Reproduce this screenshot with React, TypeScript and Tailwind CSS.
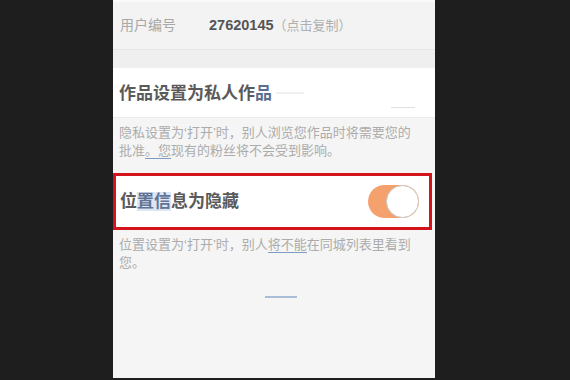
export default function App() {
  return (
    <div
      className="flex h-[380px] w-[570px] overflow-hidden bg-[#1e1e1e]"
      style={{ fontFamily: '"Liberation Sans", "Noto Sans CJK SC", sans-serif' }}
    >
      {/* phone screen */}
      <div className="ml-[113px] flex h-[378px] w-[322px] flex-col bg-[#f5f5f5]">
        {/* user id row */}
        <div className="flex h-[50px] items-center border-t-2 border-b border-t-[#fafafa] border-b-[#e6e6e6] bg-[#f3f3f3] pl-[7px]">
          <span className="w-[89px] text-[14px] text-[#a8a8a8]">用户编号</span>
          <span className="text-[14.5px] font-bold text-[#555]">27620145</span>
          <span className="text-[13px] text-[#b0b0b0]">（点击复制）</span>
        </div>

        <div className="h-[18px] bg-[#efefef]" />

        {/* private works row */}
        <div className="flex h-[50px] items-center border-b border-[#ececec] bg-white pl-[6px]">
          <span className="mt-[3px] text-[17px] font-semibold text-[#5a5a5a]">
            作品设置为私人作<span className="text-[#5b6f8f]">品</span>
          </span>
          <span className="ml-1 h-[2px] w-[28px] bg-[#f0f0f0]" />
          <span className="ml-auto mr-[20px] mt-[30px] h-px w-[24px] bg-[#e0e0e0]" />
        </div>

        <div className="px-[6px] pt-[6px] pb-[13px] text-[13px] leading-[18px] text-[#acacac]">
          <p>隐私设置为‘打开’时，别人浏览您作品时将需要您的</p>
          <p>
            批准<span className="border-b border-[#7e9bc4]">。您</span>现有的粉丝将不会受到影响。
          </p>
        </div>

        {/* location row, boxed in red */}
        <div className="mr-[3px] flex h-[57px] items-center border-[3px] border-[#d3141d] bg-white pl-[4px] pr-[10px]">
          <span className="text-[17px] font-semibold text-[#5a5a5a]">
            位<span className="bg-[#dde6f2] text-[#5f7396]">置信</span>息为隐藏
          </span>
          <div className="ml-auto flex h-[33px] w-[51px] items-center justify-end rounded-full bg-[#f5a16d]">
            <div className="h-[33px] w-[33px] rounded-full border border-[#c9c9c9] bg-white" />
          </div>
        </div>

        <div className="px-[6px] pt-[6px] text-[13px] leading-[18px] text-[#acacac]">
          <p>
            位置设置为‘打开’时，别人<span className="border-b border-[#7e9bc4]">将不能</span>在同城列表里看到
          </p>
          <p>您。</p>
        </div>

        <div className="mt-[24px] flex justify-center">
          <span className="ml-[14px] h-[2px] w-[32px] bg-[#a8bfd6]" />
        </div>
      </div>
    </div>
  );
}
